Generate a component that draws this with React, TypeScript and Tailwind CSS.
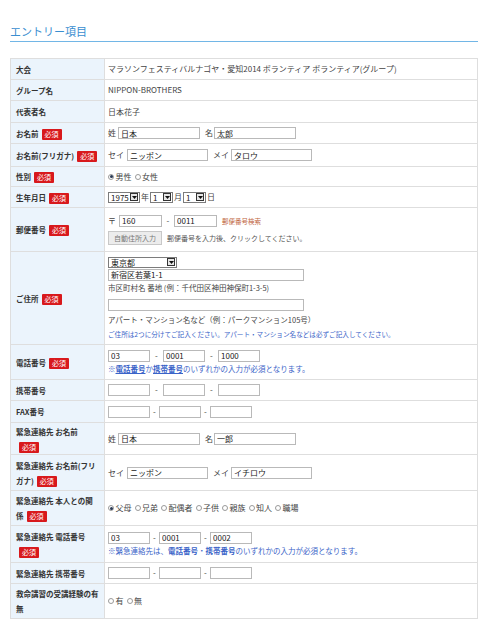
import type { ReactNode } from "react";

function Req() {
  return (
    <span className="ml-[3px] inline-block h-[11px] rounded-[1px] bg-[#d8191c] px-[3px] align-middle text-[7px] font-normal leading-[11px] text-white">
      必須
    </span>
  );
}

function Field({ value = "", className }: { value?: string; className: string }) {
  return (
    <input
      readOnly
      value={value}
      className={`h-[12px] border border-[#b9b9b9] bg-white px-[2px] align-middle text-[8px] leading-[10px] text-[#222] outline-none ${className}`}
    />
  );
}

function Select({ value, className }: { value: string; className: string }) {
  return (
    <span
      className={`inline-flex h-[11px] items-center border border-[#7c7c7c] bg-white align-middle ${className}`}
    >
      <span className="flex-1 pl-[2px] text-[8px] leading-[9px] text-[#222]">{value}</span>
      <span className="mr-[1px] flex h-[8px] w-[8px] items-center justify-center border border-[#333] bg-[#e6e6e6]">
        <svg width="5" height="3" viewBox="0 0 5 3">
          <path d="M0 0h5L2.5 3z" fill="#111" />
        </svg>
      </span>
    </span>
  );
}

function Radio({ checked = false, label }: { checked?: boolean; label: string }) {
  return (
    <span className="mr-[3px] inline-flex items-center">
      <span className="flex h-[6px] w-[6px] items-center justify-center rounded-full border border-[#9a9a9a] bg-white">
        {checked && <span className="h-[3px] w-[3px] rounded-full bg-[#2a3a55]" />}
      </span>
      <span className="ml-[1.5px]">{label}</span>
    </span>
  );
}

function Row({
  label,
  req,
  h,
  children,
}: {
  label: ReactNode;
  req?: boolean;
  h: string;
  children: ReactNode;
}) {
  return (
    <tr className={h}>
      <td className="w-[94px] border border-[#dedede] bg-[#ebf4fc] pl-[5px] pr-[2px] align-middle text-[7.5px] font-bold leading-[15px] text-[#333]">
        {label}
        {req && <Req />}
      </td>
      <td className="border border-[#dedede] pl-[3px] pr-[4px] align-middle text-[8px] leading-[12px] text-[#444]">
        {children}
      </td>
    </tr>
  );
}

function Phone({ a = "", b = "", c = "", wide }: { a?: string; b?: string; c?: string; wide?: boolean }) {
  const dash = wide ? "w-[13px]" : "w-[9px]";
  return (
    <div className="flex items-center">
      <Field value={a} className="w-[42px]" />
      <span className={`${dash} text-center`}>-</span>
      <Field value={b} className="w-[42px]" />
      <span className={`${dash} text-center`}>-</span>
      <Field value={c} className="w-[42px]" />
    </div>
  );
}

export default function App() {
  return (
    <main className="min-h-[636px] bg-white pl-[10px] pr-[5px] pt-[24px] font-[family-name:'Noto_Sans_CJK_JP',sans-serif]">
      <h2 className="border-b border-[#72b6e6] pb-[3px] text-[11px] leading-[14px] text-[#3a8ed0]">
        エントリー項目
      </h2>

      <table className="mt-[16px] w-full table-fixed border-collapse">
        <colgroup>
          <col className="w-[94px]" />
          <col />
        </colgroup>
        <tbody>
          <Row label="大会" h="h-[21px]">
            マラソンフェスティバルナゴヤ・愛知2014 ボランティア ボランティア(グループ)
          </Row>
          <Row label="グループ名" h="h-[21px]">
            NIPPON-BROTHERS
          </Row>
          <Row label="代表者名" h="h-[22px]">
            日本花子
          </Row>
          <Row label="お名前" req h="h-[21px]">
            <div className="flex items-center">
              <span className="mr-[2px]">姓</span>
              <Field value="日本" className="w-[82px]" />
              <span className="ml-[5px] mr-[1px]">名</span>
              <Field value="太郎" className="w-[82px]" />
            </div>
          </Row>
          <Row label="お名前(フリガナ)" req h="h-[23px]">
            <div className="flex items-center">
              <span className="mr-[3px]">セイ</span>
              <Field value="ニッポン" className="w-[81px]" />
              <span className="ml-[5px] mr-[2px]">メイ</span>
              <Field value="タロウ" className="w-[81px]" />
            </div>
          </Row>
          <Row label="性別" req h="h-[20px]">
            <div className="flex items-center">
              <Radio checked label="男性" />
              <Radio label="女性" />
            </div>
          </Row>
          <Row label="生年月日" req h="h-[21px]">
            <div className="flex items-center">
              <Select value="1975" className="w-[32px]" />
              <span className="mx-[1px]">年</span>
              <Select value="1" className="w-[23px]" />
              <span className="mx-[1px]">月</span>
              <Select value="1" className="w-[23px]" />
              <span className="ml-[1px]">日</span>
            </div>
          </Row>
          <Row label="郵便番号" req h="h-[44px]">
            <div className="flex items-center">
              <span className="mr-[3px]">〒</span>
              <Field value="160" className="w-[43px]" />
              <span className="w-[12px] text-center">-</span>
              <Field value="0011" className="w-[43px]" />
              <span className="ml-[5px] text-[6.5px] text-[#c0643c]">郵便番号検索</span>
            </div>
            <div className="mt-[4px] flex items-center">
              <span className="flex h-[14px] w-[54px] items-center justify-center border border-[#c8c8c8] bg-[#ececec] text-[7px] text-[#777]">
                自動住所入力
              </span>
              <span className="ml-[5px] text-[7px] text-[#555]">郵便番号を入力後、クリックしてください。</span>
            </div>
          </Row>
          <Row label="ご住所" req h="h-[93px]">
            <div className="flex flex-col items-start">
              <Select value="東京都" className="w-[69px]" />
              <Field value="新宿区若葉1-1" className="mt-[1px] w-[196px]" />
              <p className="mt-[1px] text-[7.5px]">市区町村名 番地 (例：千代田区神田神保町1-3-5)</p>
              <Field className="mt-[5px] w-[196px]" />
              <p className="mt-[3px] text-[7.5px]">アパート・マンション名など（例：パークマンション105号）</p>
              <p className="mt-[2px] text-[6.6px] text-[#3a63c8]">
                ご住所は2つに分けてご記入ください。アパート・マンション名などは必ずご記入してください。
              </p>
            </div>
          </Row>
          <Row label="電話番号" req h="h-[35px]">
            <Phone a="03" b="0001" c="1000" wide />
            <p className="mt-[1px] text-[7.5px] text-[#3a63c8]">
              ※<span className="font-bold underline">電話番号</span>か
              <span className="font-bold underline">携帯番号</span>のいずれかの入力が必須となります。
            </p>
          </Row>
          <Row label="携帯番号" h="h-[21px]">
            <Phone wide />
          </Row>
          <Row label="FAX番号" h="h-[22px]">
            <Phone />
          </Row>
          <Row
            label={
              <>
                緊急連絡先 お名前
                <br />
              </>
            }
            req
            h="h-[32px]"
          >
            <div className="flex items-center">
              <span className="mr-[2px]">姓</span>
              <Field value="日本" className="w-[82px]" />
              <span className="ml-[5px] mr-[1px]">名</span>
              <Field value="一郎" className="w-[82px]" />
            </div>
          </Row>
          <Row
            label={
              <>
                緊急連絡先 お名前(フリ
                <br />
                ガナ)
              </>
            }
            req
            h="h-[36px]"
          >
            <div className="flex items-center">
              <span className="mr-[3px]">セイ</span>
              <Field value="ニッポン" className="w-[81px]" />
              <span className="ml-[5px] mr-[2px]">メイ</span>
              <Field value="イチロウ" className="w-[81px]" />
            </div>
          </Row>
          <Row
            label={
              <>
                緊急連絡先 本人との関
                <br />係
              </>
            }
            req
            h="h-[35px]"
          >
            <div className="flex items-center">
              <Radio checked label="父母" />
              <Radio label="兄弟" />
              <Radio label="配偶者" />
              <Radio label="子供" />
              <Radio label="親族" />
              <Radio label="知人" />
              <Radio label="職場" />
            </div>
          </Row>
          <Row
            label={
              <>
                緊急連絡先 電話番号
                <br />
              </>
            }
            req
            h="h-[37px]"
          >
            <Phone a="03" b="0001" c="0002" />
            <p className="mt-[1px] text-[7.5px] text-[#3a63c8]">
              ※緊急連絡先は、<span className="font-bold">電話番号</span>・
              <span className="font-bold">携帯番号</span>のいずれかの入力が必須となります。
            </p>
          </Row>
          <Row label="緊急連絡先 携帯番号" h="h-[21px]">
            <Phone />
          </Row>
          <Row
            label={
              <>
                救命講習の受講経験の有
                <br />無
              </>
            }
            h="h-[35px]"
          >
            <div className="flex items-center">
              <Radio label="有" />
              <Radio label="無" />
            </div>
          </Row>
        </tbody>
      </table>
    </main>
  );
}
